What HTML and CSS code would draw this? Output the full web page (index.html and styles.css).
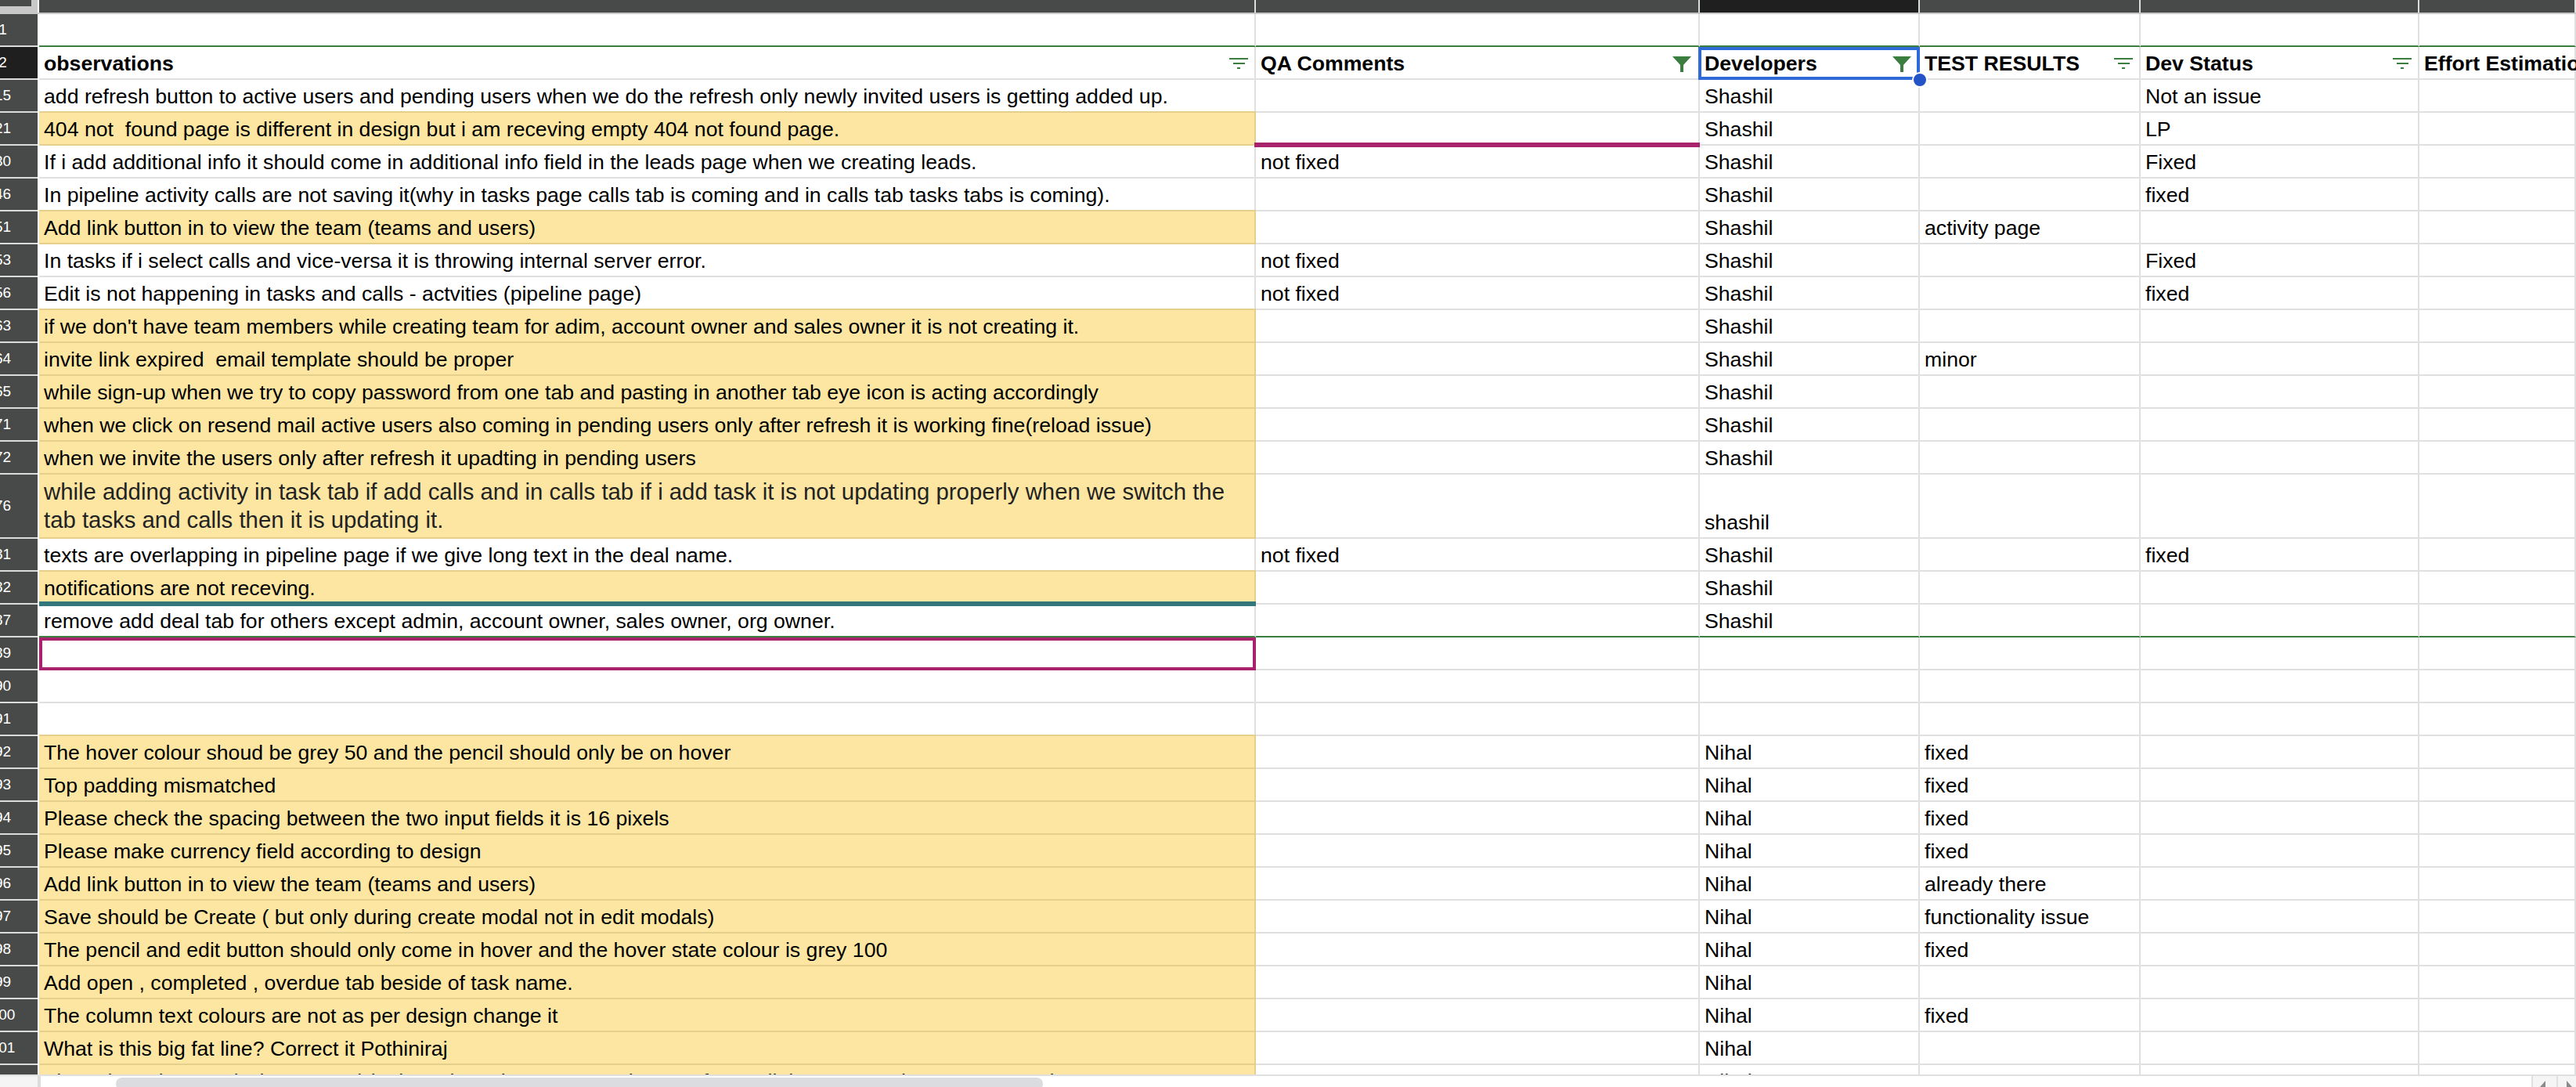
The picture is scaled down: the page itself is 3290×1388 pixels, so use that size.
FILE: index.html
```html
<!DOCTYPE html>
<html lang="en">
<head>
    <meta charset="UTF-8">
    <title>QA sheet</title>
    <link rel="stylesheet" href="styles.css">
</head>
<body>
    <div class="page">
        <div class="col-bar">
            <div class="corner"><span class="corner-inner"></span></div>
            <div class="col-head"></div>
            <div class="col-head"></div>
            <div class="col-head active"></div>
            <div class="col-head"></div>
            <div class="col-head"></div>
            <div class="col-head"></div>
        </div>

        <div class="sheet">
            <div class="row filter-end">
                <div class="num">1</div><div class="cell"></div><div class="cell"></div><div class="cell"></div><div class="cell"></div><div class="cell"></div><div class="cell"></div>
            </div>

            <div class="row head">
                <div class="num selected">2</div>
                <div class="cell">observations
                    <svg class="filter" viewBox="0 0 24 16"><path d="M0 2h24v2H0zM5 8h15v2H5zM10 14h4v2h-4z"/></svg>
                </div>
                <div class="cell">QA Comments
                    <svg class="funnel" viewBox="0 0 24 20"><path d="M0 0h24L14 11v9h-4v-9z"/></svg>
                </div>
                <div class="cell over">Developers
                    <svg class="funnel" viewBox="0 0 24 20"><path d="M0 0h24L14 11v9h-4v-9z"/></svg>
                    <span class="selection"><span class="handle"></span></span>
                </div>
                <div class="cell">TEST RESULTS
                    <svg class="filter" viewBox="0 0 24 16"><path d="M0 2h24v2H0zM5 8h15v2H5zM10 14h4v2h-4z"/></svg>
                </div>
                <div class="cell">Dev Status
                    <svg class="filter" viewBox="0 0 24 16"><path d="M0 2h24v2H0zM5 8h15v2H5zM10 14h4v2h-4z"/></svg>
                </div>
                <div class="cell">Effort Estimation</div>
            </div>

            <div class="row">
                <div class="num">15</div>
                <div class="cell">add refresh button to active users and pending users when we do the refresh only newly invited users is getting added up.</div>
                <div class="cell"></div><div class="cell">Shashil</div><div class="cell"></div><div class="cell">Not an issue</div><div class="cell"></div>
            </div>
            <div class="row">
                <div class="num">21</div>
                <div class="cell yellow">404 not &nbsp;found page is different in design but i am receving empty 404 not found page.</div>
                <div class="cell over"><span class="bar pink"></span></div><div class="cell">Shashil</div><div class="cell"></div><div class="cell">LP</div><div class="cell"></div>
            </div>
            <div class="row">
                <div class="num">30</div>
                <div class="cell">If i add additional info it should come in additional info field in the leads page when we creating leads.</div>
                <div class="cell">not fixed</div><div class="cell">Shashil</div><div class="cell"></div><div class="cell">Fixed</div><div class="cell"></div>
            </div>
            <div class="row">
                <div class="num">46</div>
                <div class="cell">In pipeline activity calls are not saving it(why in tasks page calls tab is coming and in calls tab tasks tabs is coming).</div>
                <div class="cell"></div><div class="cell">Shashil</div><div class="cell"></div><div class="cell">fixed</div><div class="cell"></div>
            </div>
            <div class="row">
                <div class="num">51</div>
                <div class="cell yellow">Add link button in to view the team (teams and users)</div>
                <div class="cell"></div><div class="cell">Shashil</div><div class="cell">activity page</div><div class="cell"></div><div class="cell"></div>
            </div>
            <div class="row">
                <div class="num">53</div>
                <div class="cell">In tasks if i select calls and vice-versa it is throwing internal server error.</div>
                <div class="cell">not fixed</div><div class="cell">Shashil</div><div class="cell"></div><div class="cell">Fixed</div><div class="cell"></div>
            </div>
            <div class="row">
                <div class="num">56</div>
                <div class="cell">Edit is not happening in tasks and calls - actvities (pipeline page)</div>
                <div class="cell">not fixed</div><div class="cell">Shashil</div><div class="cell"></div><div class="cell">fixed</div><div class="cell"></div>
            </div>
            <div class="row">
                <div class="num">63</div>
                <div class="cell yellow">if we don't have team members while creating team for adim, account owner and sales owner it is not creating it.</div>
                <div class="cell"></div><div class="cell">Shashil</div><div class="cell"></div><div class="cell"></div><div class="cell"></div>
            </div>
            <div class="row">
                <div class="num">64</div>
                <div class="cell yellow">invite link expired &nbsp;email template should be proper</div>
                <div class="cell"></div><div class="cell">Shashil</div><div class="cell">minor</div><div class="cell"></div><div class="cell"></div>
            </div>
            <div class="row">
                <div class="num">65</div>
                <div class="cell yellow">while sign-up when we try to copy password from one tab and pasting in another tab eye icon is acting accordingly</div>
                <div class="cell"></div><div class="cell">Shashil</div><div class="cell"></div><div class="cell"></div><div class="cell"></div>
            </div>
            <div class="row">
                <div class="num">71</div>
                <div class="cell yellow">when we click on resend mail active users also coming in pending users only after refresh it is working fine(reload issue)</div>
                <div class="cell"></div><div class="cell">Shashil</div><div class="cell"></div><div class="cell"></div><div class="cell"></div>
            </div>
            <div class="row">
                <div class="num">72</div>
                <div class="cell yellow">when we invite the users only after refresh it upadting in pending users</div>
                <div class="cell"></div><div class="cell">Shashil</div><div class="cell"></div><div class="cell"></div><div class="cell"></div>
            </div>
            <div class="row tall">
                <div class="num">76</div>
                <div class="cell yellow wrapped">while adding activity in task tab if add calls and in calls tab if i add task it is not updating properly when we switch the tab tasks and calls then it is updating it.</div>
                <div class="cell"></div><div class="cell">shashil</div><div class="cell"></div><div class="cell"></div><div class="cell"></div>
            </div>
            <div class="row">
                <div class="num">81</div>
                <div class="cell">texts are overlapping in pipeline page if we give long text in the deal name.</div>
                <div class="cell">not fixed</div><div class="cell">Shashil</div><div class="cell"></div><div class="cell">fixed</div><div class="cell"></div>
            </div>
            <div class="row">
                <div class="num">82</div>
                <div class="cell yellow over">notifications are not receving.<span class="bar teal"></span></div>
                <div class="cell"></div><div class="cell">Shashil</div><div class="cell"></div><div class="cell"></div><div class="cell"></div>
            </div>
            <div class="row filter-end">
                <div class="num">87</div>
                <div class="cell">remove add deal tab for others except admin, account owner, sales owner, org owner.</div>
                <div class="cell"></div><div class="cell">Shashil</div><div class="cell"></div><div class="cell"></div><div class="cell"></div>
            </div>
            <div class="row">
                <div class="num">89</div>
                <div class="cell over"><span class="pink-box"></span></div>
                <div class="cell"></div><div class="cell"></div><div class="cell"></div><div class="cell"></div><div class="cell"></div>
            </div>
            <div class="row">
                <div class="num">90</div><div class="cell"></div><div class="cell"></div><div class="cell"></div><div class="cell"></div><div class="cell"></div><div class="cell"></div>
            </div>
            <div class="row">
                <div class="num">91</div><div class="cell"></div><div class="cell"></div><div class="cell"></div><div class="cell"></div><div class="cell"></div><div class="cell"></div>
            </div>
            <div class="row">
                <div class="num">92</div>
                <div class="cell yellow">The hover colour shoud be grey 50 and the pencil should only be on hover</div>
                <div class="cell"></div><div class="cell">Nihal</div><div class="cell">fixed</div><div class="cell"></div><div class="cell"></div>
            </div>
            <div class="row">
                <div class="num">93</div>
                <div class="cell yellow">Top padding mismatched</div>
                <div class="cell"></div><div class="cell">Nihal</div><div class="cell">fixed</div><div class="cell"></div><div class="cell"></div>
            </div>
            <div class="row">
                <div class="num">94</div>
                <div class="cell yellow">Please check the spacing between the two input fields it is 16 pixels</div>
                <div class="cell"></div><div class="cell">Nihal</div><div class="cell">fixed</div><div class="cell"></div><div class="cell"></div>
            </div>
            <div class="row">
                <div class="num">95</div>
                <div class="cell yellow">Please make currency field according to design</div>
                <div class="cell"></div><div class="cell">Nihal</div><div class="cell">fixed</div><div class="cell"></div><div class="cell"></div>
            </div>
            <div class="row">
                <div class="num">96</div>
                <div class="cell yellow">Add link button in to view the team (teams and users)</div>
                <div class="cell"></div><div class="cell">Nihal</div><div class="cell">already there</div><div class="cell"></div><div class="cell"></div>
            </div>
            <div class="row">
                <div class="num">97</div>
                <div class="cell yellow">Save should be Create ( but only during create modal not in edit modals)</div>
                <div class="cell"></div><div class="cell">Nihal</div><div class="cell">functionality issue</div><div class="cell"></div><div class="cell"></div>
            </div>
            <div class="row">
                <div class="num">98</div>
                <div class="cell yellow">The pencil and edit button should only come in hover and the hover state colour is grey 100</div>
                <div class="cell"></div><div class="cell">Nihal</div><div class="cell">fixed</div><div class="cell"></div><div class="cell"></div>
            </div>
            <div class="row">
                <div class="num">99</div>
                <div class="cell yellow">Add open , completed , overdue tab beside of task name.</div>
                <div class="cell"></div><div class="cell">Nihal</div><div class="cell"></div><div class="cell"></div><div class="cell"></div>
            </div>
            <div class="row">
                <div class="num">100</div>
                <div class="cell yellow">The column text colours are not as per design change it</div>
                <div class="cell"></div><div class="cell">Nihal</div><div class="cell">fixed</div><div class="cell"></div><div class="cell"></div>
            </div>
            <div class="row">
                <div class="num">101</div>
                <div class="cell yellow">What is this big fat line? Correct it Pothiniraj</div>
                <div class="cell"></div><div class="cell">Nihal</div><div class="cell"></div><div class="cell"></div><div class="cell"></div>
            </div>
            <div class="row">
                <div class="num">102</div>
                <div class="cell yellow">The selected status (colour or text) in the column is grey 900. Please refer to all the status colours once together</div>
                <div class="cell"></div><div class="cell">Nihal</div><div class="cell"></div><div class="cell"></div><div class="cell"></div>
            </div>
        </div>

        <div class="scroll-bar">
            <div class="scroll-corner"></div>
            <div class="scroll-track"><div class="scroll-thumb"></div></div>
            <div class="scroll-btn"><span class="arrow left"></span></div>
            <div class="scroll-btn"><span class="arrow right"></span></div>
        </div>
    </div>
</body>
</html>
```

FILE: styles.css
```css
* {
    box-sizing: border-box;
}

html, body {
    margin: 0;
    padding: 0;
    height: 100%;
    overflow: hidden;
    background-color: #fff;
}

body {
    font-family: "Liberation Sans", Arial, sans-serif;
    font-size: 26.67px;
    color: #000;
}

.page {
    display: flex;
    flex-direction: column;
    height: 100vh;
    overflow: hidden;
}

/* column header strip, only its bottom edge is on screen */
.col-bar,
.row {
    display: grid;
    grid-template-columns: 50px 1554px 567px 281px 282px 356px 200px;
}

.col-bar {
    flex: none;
    height: 18px;
    background-color: #c8c8c8;
    padding-bottom: 2px;
}

.corner {
    background-color: #c8c8c8;
    border-right: 2px solid #fff;
}

.corner-inner {
    display: block;
    width: 40px;
    height: 8px;
    background-color: #474a48;
}

.col-head {
    background-color: #474a48;
    border-right: 2px solid #dcdcdc;
}

.col-head.active {
    background-color: #1f1f1f;
}

.sheet {
    flex: 1;
    min-height: 0;
    overflow: hidden;
}

.row {
    height: 42px;
}

.row.tall {
    height: 82px;
}

.num {
    display: flex;
    align-items: center;
    justify-content: center;
    width: 48px;
    padding-right: 41px;
    margin-right: 2px;
    background-color: #474a48;
    border-bottom: 2px solid #dcdcdc;
    color: #fff;
    font-size: 19px;
    white-space: nowrap;
}

.num.selected {
    background-color: #1f1f1f;
}

.cell {
    position: relative;
    display: flex;
    align-items: flex-end;
    padding: 0 6px 3px;
    border-right: 2px solid #e0e0e0;
    border-bottom: 2px solid #e0e0e0;
    line-height: 31px;
    white-space: nowrap;
}

/* cells holding a coloured border have to paint above their neighbours */
.cell.over {
    z-index: 2;
}

.head .cell {
    font-weight: bold;
}

.filter-end .cell {
    border-bottom-color: #3c7d40;
}

.cell.yellow {
    background-color: #fce6a2;
    border-right-color: #e5cf8c;
    border-bottom-color: #e5cf8c;
    box-shadow: 0 -2px 0 #e5cf8c;
}

.cell.wrapped {
    padding-bottom: 4px;
    color: #222;
    font-size: 29.33px;
    line-height: 36px;
    white-space: normal;
}

.filter {
    position: absolute;
    right: 8px;
    top: 12px;
    width: 24px;
    height: 16px;
    fill: #3c7d40;
}

.funnel {
    position: absolute;
    right: 9px;
    top: 12px;
    width: 24px;
    height: 20px;
    fill: #3c7d40;
}

.selection {
    position: absolute;
    top: 0;
    right: -2px;
    bottom: -2px;
    left: -2px;
    border: 4px solid #2f6bd8;
}

.handle {
    position: absolute;
    right: -14px;
    bottom: -14px;
    width: 20px;
    height: 20px;
    background-color: #2453c8;
    border: 2px solid #fff;
    border-radius: 50%;
}

.bar {
    position: absolute;
    bottom: -4px;
    height: 6px;
}

.bar.pink {
    left: -2px;
    right: -2px;
    background-color: #a8226c;
}

.bar.teal {
    left: 0;
    right: -2px;
    background-color: #33767c;
}

.pink-box {
    position: absolute;
    top: 0;
    right: -2px;
    bottom: -2px;
    left: 0;
    border: 4px solid #a8226c;
}

.scroll-bar {
    flex: none;
    display: flex;
    height: 16px;
    background-color: #fff;
    border-top: 2px solid #e0e0e0;
}

.scroll-corner {
    width: 52px;
    background-color: #f5f5f5;
    border-right: 4px solid #dcdcdc;
}

.scroll-track {
    flex: 1;
    padding: 2px 0 0 96px;
}

.scroll-thumb {
    width: 1184px;
    height: 16px;
    background-color: #dadce0;
    border-radius: 8px;
}

.scroll-btn {
    position: relative;
    width: 32px;
    background-color: #f5f5f5;
    border-left: 2px solid #e0e0e0;
}

.scroll-btn:last-child {
    width: 25px;
}

.arrow {
    position: absolute;
    top: 6px;
    width: 0;
    height: 0;
    border-top: 8px solid transparent;
    border-bottom: 8px solid transparent;
}

.arrow.left {
    left: 9px;
    border-right: 7px solid #8a8a8a;
}

.arrow.right {
    left: 11px;
    border-left: 7px solid #8a8a8a;
}
```
